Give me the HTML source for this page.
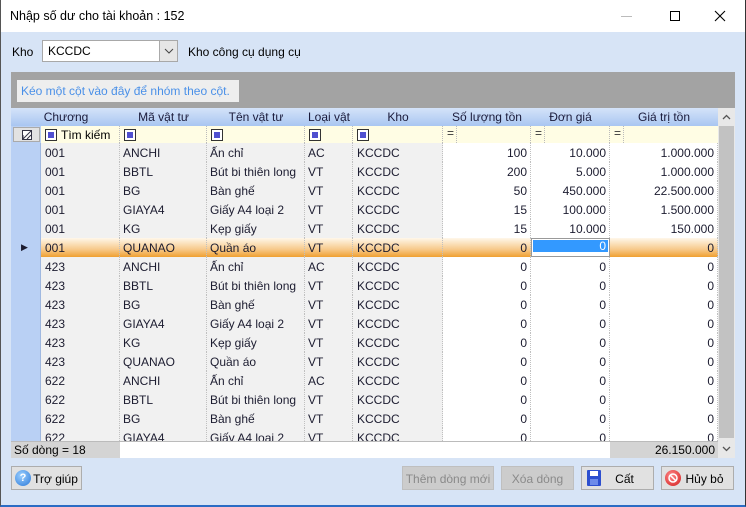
<!DOCTYPE html>
<html><head><meta charset="utf-8"><style>
*{margin:0;padding:0;box-sizing:border-box}
body{width:746px;height:507px;overflow:hidden;font-family:"Liberation Sans",sans-serif;font-size:12px;color:#000;background:#fff;position:relative}
.a{position:absolute}
#body{left:1px;top:32px;width:744px;height:473px;background:#d7e4f6}
.title{left:10px;top:9px;font-size:12.5px}
.win{border-right:1px solid #333;border-left:1px solid #555;border-bottom:2px solid #2b6cc4;left:0;top:0;width:746px;height:507px}
.grid{left:11px;top:72px;width:724px;height:386px;background:#fff;overflow:hidden}
.grp{left:0;top:0;width:724px;height:36px;background:#a3a3a3}
.grpbox{left:6px;top:8px;width:222px;height:22px;background:#eeeeee;color:#4a90e8;font-size:12px;padding:4px 0 0 4px;white-space:nowrap;overflow:hidden}
.hdr{left:0;top:36px;width:707px;height:18px;background:linear-gradient(#d4e3f9,#a9c6f1)}
.hdr span{position:absolute;top:2px;text-align:center;color:#1a1a3a}
.flt{left:30px;top:54px;width:677px;height:17px;background:#fffde4}
.rows{left:0;top:71px;width:707px;height:298px;overflow:hidden}
.r{position:relative;height:19px;border-bottom:1px dotted #c8c8c8}
.r div{position:absolute;top:0;height:19px;padding-top:3px;border-right:1px dotted #c0c0c0;white-space:nowrap;overflow:hidden;color:#1c1c30}
.ind{left:0;width:30px;background:#b9d0f4;border-right:1px solid #9fb8e0!important}
.g{background:#f1f1f1}
.w{background:#fff;text-align:right;padding-right:3px}
.c1{left:30px;width:79px;padding-left:4px}.c2{left:109px;width:87px;padding-left:3px}.c3{left:196px;width:98px;padding-left:3px}
.c4{left:294px;width:48px;padding-left:3px}.c5{left:342px;width:90px;padding-left:4px}.c6{left:432px;width:88px}.c7{left:520px;width:79px}.c8{left:599px;width:108px}
.sel div{background:linear-gradient(#fff7ea,#f7c98a 60%,#f0a030)!important}
.sb{left:707px;top:36px;width:17px;height:350px;background:#e8e8e8}
.ft{left:0;top:369px;width:707px;height:17px;background:#fff;border-top:1px solid #bbb}
.btn{height:24px;top:466px;background:#e1e1e1;border:1px solid #adadad;text-align:center;padding-top:5px}
.cb{width:12px;height:12px;border:1px solid #333;background:#fff;position:absolute;top:3px}
.cb:after{content:"";position:absolute;left:2px;top:2px;width:6px;height:6px;background:#5050d0}
.eq{position:absolute;top:0;font-size:12px;color:#333}
.fs{position:absolute;top:0;height:17px;border-right:1px dotted #bbb}
</style></head><body>
<div class="a title">Nhập số dư cho tài khoản : 152</div>
<div class="a" style="left:621px;top:16px;width:11px;height:1px;background:#bbb"></div>
<div class="a" style="left:670px;top:11px;width:10px;height:10px;border:1px solid #000"></div>
<svg class="a" style="left:714px;top:10px" width="12" height="12"><path d="M1 1L11 11M11 1L1 11" stroke="#000" stroke-width="1.1"/></svg>
<div class="a" id="body"></div>
<div class="a" style="left:12px;top:45px">Kho</div>
<div class="a" style="left:42px;top:40px;width:136px;height:22px;background:#fff;border:1px solid #a8a8a8;padding:3px 0 0 5px">KCCDC</div>
<div class="a" style="left:159px;top:41px;width:18px;height:20px;background:#e6e6e6;border-left:1px solid #aaa"><svg class="a" style="left:4px;top:7px" width="10" height="6"><path d="M1 1L5 5L9 1" stroke="#444" fill="none"/></svg></div>
<div class="a" style="left:188px;top:45px">Kho công cụ dụng cụ</div>

<div class="a grid">
<div class="a grp"><div class="a grpbox">Kéo một cột vào đây để nhóm theo cột.</div></div>
<div class="a hdr">
<span style="left:30px;width:50px">Chương</span><span style="left:109px;width:87px">Mã vật tư</span><span style="left:196px;width:98px">Tên vật tư</span><span style="left:294px;width:48px">Loại vật</span><span style="left:342px;width:90px">Kho</span><span style="left:432px;width:88px">Số lượng tồn</span><span style="left:520px;width:79px">Đơn giá</span><span style="left:599px;width:108px">Giá trị tồn</span>
</div>
<div class="a" style="left:0;top:54px;width:30px;height:17px;background:#b9d0f4"><div class="a" style="left:2px;top:1px;width:27px;height:15px;background:#e2e2e2;border:1px solid #aaa"><svg class="a" style="left:8px;top:2px" width="10" height="10"><rect x="0.5" y="0.5" width="9" height="9" fill="#fff" stroke="#334"/><path d="M1 9L9 1M1 9L1 5M5 9L9 5" stroke="#334"/></svg></div></div>
<div class="a flt">
<div class="cb" style="left:4px"></div><span class="a" style="left:20px;top:2px">Tìm kiếm</span><div class="fs" style="left:0;width:79px"></div>
<div class="cb" style="left:83px"></div><div class="fs" style="left:79px;width:87px"></div>
<div class="cb" style="left:170px"></div><div class="fs" style="left:166px;width:98px"></div>
<div class="cb" style="left:268px"></div><div class="fs" style="left:264px;width:48px"></div>
<div class="cb" style="left:316px"></div><div class="fs" style="left:312px;width:90px"></div>
<span class="eq" style="left:406px">=</span><div class="fs" style="left:402px;width:14px"></div><div class="fs" style="left:416px;width:74px"></div>
<span class="eq" style="left:494px">=</span><div class="fs" style="left:490px;width:14px"></div><div class="fs" style="left:504px;width:65px"></div>
<span class="eq" style="left:573px">=</span><div class="fs" style="left:569px;width:14px"></div>
</div>
<div class="a rows">
<div class="r"><div class="ind"></div><div class="c1 g">001</div><div class="c2 g">ANCHI</div><div class="c3 g">Ấn chỉ</div><div class="c4 g">AC</div><div class="c5 g">KCCDC</div><div class="c6 w">100</div><div class="c7 w">10.000</div><div class="c8 w">1.000.000</div></div>
<div class="r"><div class="ind"></div><div class="c1 g">001</div><div class="c2 g">BBTL</div><div class="c3 g">Bút bi thiên long</div><div class="c4 g">VT</div><div class="c5 g">KCCDC</div><div class="c6 w">200</div><div class="c7 w">5.000</div><div class="c8 w">1.000.000</div></div>
<div class="r"><div class="ind"></div><div class="c1 g">001</div><div class="c2 g">BG</div><div class="c3 g">Bàn ghế</div><div class="c4 g">VT</div><div class="c5 g">KCCDC</div><div class="c6 w">50</div><div class="c7 w">450.000</div><div class="c8 w">22.500.000</div></div>
<div class="r"><div class="ind"></div><div class="c1 g">001</div><div class="c2 g">GIAYA4</div><div class="c3 g">Giấy A4 loại 2</div><div class="c4 g">VT</div><div class="c5 g">KCCDC</div><div class="c6 w">15</div><div class="c7 w">100.000</div><div class="c8 w">1.500.000</div></div>
<div class="r"><div class="ind"></div><div class="c1 g">001</div><div class="c2 g">KG</div><div class="c3 g">Kẹp giấy</div><div class="c4 g">VT</div><div class="c5 g">KCCDC</div><div class="c6 w">15</div><div class="c7 w">10.000</div><div class="c8 w">150.000</div></div>
<div class="r sel"><div class="ind" style="background:#b9d0f4!important;font-size:9px;padding:4px 0 0 10px">▶</div><div class="c1 g">001</div><div class="c2 g">QUANAO</div><div class="c3 g">Quần áo</div><div class="c4 g">VT</div><div class="c5 g">KCCDC</div><div class="c6 w">0</div><div class="c7 w" style="background:#fff!important;padding:0;border:1px solid #999"><span style="display:block;background:#3399ff;color:#fff;height:12px;margin:1px 1px 0 1px;text-align:right;line-height:12px;padding-right:2px">0</span></div><div class="c8 w">0</div></div>
<div class="r"><div class="ind"></div><div class="c1 g">423</div><div class="c2 g">ANCHI</div><div class="c3 g">Ấn chỉ</div><div class="c4 g">AC</div><div class="c5 g">KCCDC</div><div class="c6 w">0</div><div class="c7 w">0</div><div class="c8 w">0</div></div>
<div class="r"><div class="ind"></div><div class="c1 g">423</div><div class="c2 g">BBTL</div><div class="c3 g">Bút bi thiên long</div><div class="c4 g">VT</div><div class="c5 g">KCCDC</div><div class="c6 w">0</div><div class="c7 w">0</div><div class="c8 w">0</div></div>
<div class="r"><div class="ind"></div><div class="c1 g">423</div><div class="c2 g">BG</div><div class="c3 g">Bàn ghế</div><div class="c4 g">VT</div><div class="c5 g">KCCDC</div><div class="c6 w">0</div><div class="c7 w">0</div><div class="c8 w">0</div></div>
<div class="r"><div class="ind"></div><div class="c1 g">423</div><div class="c2 g">GIAYA4</div><div class="c3 g">Giấy A4 loại 2</div><div class="c4 g">VT</div><div class="c5 g">KCCDC</div><div class="c6 w">0</div><div class="c7 w">0</div><div class="c8 w">0</div></div>
<div class="r"><div class="ind"></div><div class="c1 g">423</div><div class="c2 g">KG</div><div class="c3 g">Kẹp giấy</div><div class="c4 g">VT</div><div class="c5 g">KCCDC</div><div class="c6 w">0</div><div class="c7 w">0</div><div class="c8 w">0</div></div>
<div class="r"><div class="ind"></div><div class="c1 g">423</div><div class="c2 g">QUANAO</div><div class="c3 g">Quần áo</div><div class="c4 g">VT</div><div class="c5 g">KCCDC</div><div class="c6 w">0</div><div class="c7 w">0</div><div class="c8 w">0</div></div>
<div class="r"><div class="ind"></div><div class="c1 g">622</div><div class="c2 g">ANCHI</div><div class="c3 g">Ấn chỉ</div><div class="c4 g">AC</div><div class="c5 g">KCCDC</div><div class="c6 w">0</div><div class="c7 w">0</div><div class="c8 w">0</div></div>
<div class="r"><div class="ind"></div><div class="c1 g">622</div><div class="c2 g">BBTL</div><div class="c3 g">Bút bi thiên long</div><div class="c4 g">VT</div><div class="c5 g">KCCDC</div><div class="c6 w">0</div><div class="c7 w">0</div><div class="c8 w">0</div></div>
<div class="r"><div class="ind"></div><div class="c1 g">622</div><div class="c2 g">BG</div><div class="c3 g">Bàn ghế</div><div class="c4 g">VT</div><div class="c5 g">KCCDC</div><div class="c6 w">0</div><div class="c7 w">0</div><div class="c8 w">0</div></div>
<div class="r"><div class="ind"></div><div class="c1 g">622</div><div class="c2 g">GIAYA4</div><div class="c3 g">Giấy A4 loại 2</div><div class="c4 g">VT</div><div class="c5 g">KCCDC</div><div class="c6 w">0</div><div class="c7 w">0</div><div class="c8 w">0</div></div>
</div>
<div class="a ft">
<div class="a" style="left:0;top:0;width:109px;height:16px;background:#d4d4d4;padding:1px 0 0 3px">Số dòng = 18</div>
<div class="a" style="left:599px;top:0;width:108px;height:16px;background:#d4d4d4;text-align:right;padding:1px 3px 0 0">26.150.000</div>
</div>
<div class="a sb">
<svg class="a" style="left:4px;top:6px" width="9" height="6"><path d="M1 5L4.5 1.5L8 5" stroke="#555" fill="none" stroke-width="1.3"/></svg>
<div class="a" style="left:1px;top:18px;width:15px;height:312px;background:#c2c2c2"></div>
<svg class="a" style="left:4px;top:338px" width="9" height="6"><path d="M1 1L4.5 4.5L8 1" stroke="#555" fill="none" stroke-width="1.3"/></svg>
</div>
</div>

<div class="a btn" style="left:11px;width:71px;padding-left:18px">Trợ giúp</div>
<div class="a" style="left:15px;top:470px;width:16px;height:16px;border-radius:50%;background:radial-gradient(circle at 40% 35%,#9cd0ff,#2a78d8);color:#fff;font-size:11px;font-weight:bold;text-align:center;line-height:16px">?</div>
<div class="a btn" style="left:402px;width:92px;color:#8a8a8a;background:#cccccc;border-color:#bfbfbf">Thêm dòng mới</div>
<div class="a btn" style="left:501px;width:73px;color:#8a8a8a;background:#cccccc;border-color:#bfbfbf">Xóa dòng</div>
<div class="a btn" style="left:581px;width:73px;padding-left:14px">Cất</div>
<div class="a" style="left:587px;top:470px;width:14px;height:16px;background:#2d4fcf;border-radius:1px"><div class="a" style="left:3px;top:1px;width:8px;height:5px;background:#fff"></div><div class="a" style="left:3px;top:9px;width:8px;height:6px;background:#6d8bea"></div></div>
<div class="a btn" style="left:661px;width:73px;padding-left:14px">Hủy bỏ</div>
<div class="a" style="left:665px;top:470px;width:16px;height:16px;border-radius:50%;background:radial-gradient(circle at 40% 35%,#ff8a8a,#d21a1a)"><svg class="a" style="left:3px;top:3px" width="10" height="10"><circle cx="5" cy="5" r="4" stroke="#fff" stroke-width="1.5" fill="none"/><path d="M2 2L8 8" stroke="#fff" stroke-width="1.5"/></svg></div>
<div class="a win"></div>
</body></html>
